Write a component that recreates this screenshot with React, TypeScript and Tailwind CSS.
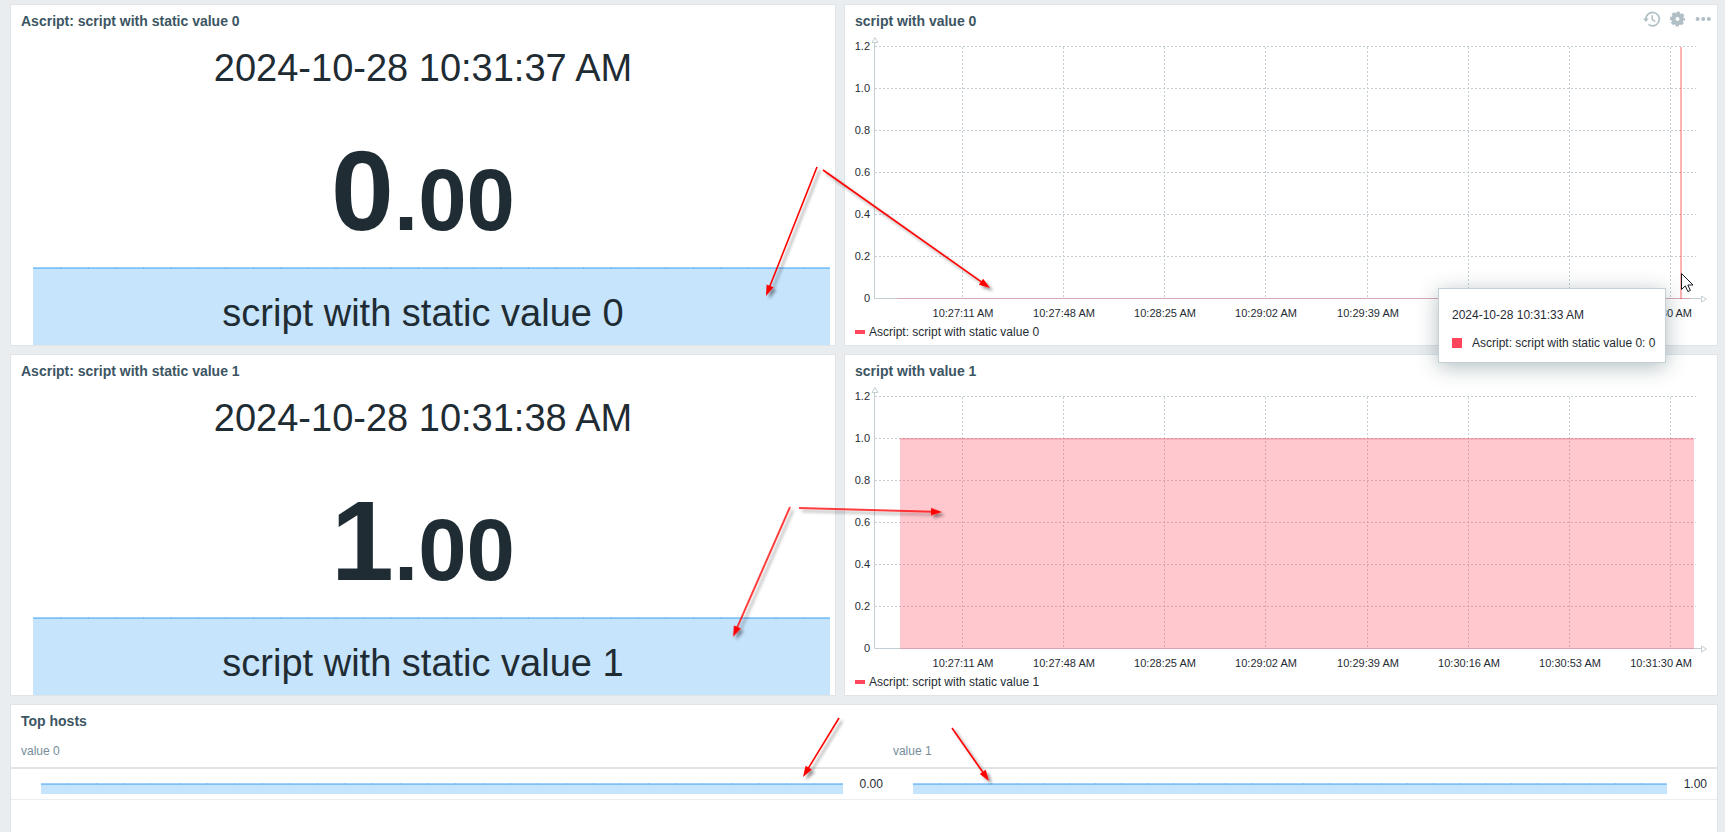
import type { ReactNode } from "react";

// ================= TYPES =================
interface ItemWidgetProps {
  title: string;
  time: string;
  whole: string;
  decimals: string;
  description: string;
}

interface GraphWidgetProps {
  title: string;
  legend: string;
  children?: ReactNode;
  actions?: ReactNode;
}

interface Arrow {
  from: [number, number];
  to: [number, number];
}

// ================= DATA =================
const Y_LABELS = ["1.2", "1.0", "0.8", "0.6", "0.4", "0.2", "0"];

const X_LABELS = [
  "10:27:11 AM",
  "10:27:48 AM",
  "10:28:25 AM",
  "10:29:02 AM",
  "10:29:39 AM",
  "10:30:16 AM",
  "10:30:53 AM",
  "10:31:30 AM",
];

const ARROWS: Arrow[] = [
  { from: [817, 167], to: [766, 296] },
  { from: [823, 170], to: [990, 288] },
  { from: [790, 507], to: [733, 637] },
  { from: [799, 508], to: [942, 512] },
  { from: [839, 718], to: [803, 777] },
  { from: [952, 728], to: [989, 781] },
];

// ================= PANEL =================
function Panel({
  title,
  actions,
  className = "",
  children,
}: {
  title: string;
  actions?: ReactNode;
  className?: string;
  children: ReactNode;
}) {
  return (
    <section className={`border border-[#dfe4e7] bg-white ${className}`}>
      <header className="flex h-[30px] items-start justify-between pr-[6px] pl-[10px]">
        <h2 className="pt-2 text-sm leading-4 font-bold text-[#3c5563]">{title}</h2>
        {actions}
      </header>
      {children}
    </section>
  );
}

// ================= SPARKLINE =================
function SparkTop({ step }: { step: number }) {
  return (
    <svg className="block h-[2px] w-full" aria-hidden="true">
      <rect width="100%" height="1" fill="#9dd0fa" />
      <rect y="1" width="100%" height="1" fill="#7cc2f9" />
      <line
        x1={step}
        x2="100%"
        y1="1"
        y2="1"
        stroke="#6bb0e8"
        strokeOpacity="0.6"
        strokeWidth="2"
        strokeDasharray={`1 ${step - 1}`}
      />
    </svg>
  );
}

// ================= ITEM VALUE =================
function ItemWidget({ title, time, whole, decimals, description }: ItemWidgetProps) {
  return (
    <Panel title={title}>
      <p className="mt-[11px] text-center text-[38px] leading-[44px]">{time}</p>
      <p className="mt-11 text-center text-[113px] leading-[114px] font-bold">
        {whole}
        <span className="text-[87px] leading-none">.{decimals}</span>
      </p>
      <div className="mt-[19px] mr-[5px] ml-[22px] bg-[#c6e4fc]">
        <SparkTop step={27.5} />
        <p className="pt-[22px] pr-[17px] pb-[10px] text-center text-[38px] leading-[44px]">
          {description}
        </p>
      </div>
    </Panel>
  );
}

// ================= GRAPH =================
const gridX = (i: number): number => Math.round(117 + i * 101.14);
const gridY = (i: number): number => 11 + i * 42;

function GraphWidget({ title, legend, children, actions }: GraphWidgetProps) {
  return (
    <Panel title={title} actions={actions}>
      <svg viewBox="0 0 872 285" className="block h-auto w-full" role="img" aria-label={title}>
        <g stroke="#c4cfd5" strokeDasharray="2 2">
          {Y_LABELS.slice(0, -1).map((label, i) => (
            <line key={label} x1="30" x2="851" y1={gridY(i) + 0.5} y2={gridY(i) + 0.5} />
          ))}
          {X_LABELS.map((label, i) => (
            <line key={label} x1={gridX(i) + 0.5} x2={gridX(i) + 0.5} y1="12" y2="263" />
          ))}
        </g>
        <g stroke="#c4cfd5" fill="#fff">
          <path d="M29.5 7.5V263.5H856" fill="none" />
          <path d="M27 7.5h6l-3-5z" />
          <path d="M856.5 261v6l5-3z" />
        </g>
        <g fontSize="11" fill="#1f2c33">
          {Y_LABELS.map((label, i) => (
            <text key={label} x="25" y={gridY(i) + 4} textAnchor="end">
              {label}
            </text>
          ))}
          {X_LABELS.map((label, i) => {
            const last = i === X_LABELS.length - 1;
            return (
              <text
                key={label}
                x={last ? 847 : gridX(i) + 1}
                y="282"
                textAnchor={last ? "end" : "middle"}
              >
                {label}
              </text>
            );
          })}
        </g>
        {children}
      </svg>
      <div className="flex h-[25px] items-center gap-1 pb-[2px] pl-[10px] text-xs">
        <span className="h-1 w-[10px] bg-[#ff465c]" />
        {legend}
      </div>
    </Panel>
  );
}

function GraphActions() {
  return (
    <div className="flex gap-2 pt-[6px] text-[#b0bec5]">
      <button type="button" aria-label="Time period">
        <svg width="18" height="16" viewBox="0 0 18 16" fill="none" stroke="currentColor">
          <path d="M2.9 8.6a6.7 6.7 0 1 1 2.6 4.8" strokeWidth="1.7" />
          <path d="M0 7.6h5.8L2.9 11z" fill="currentColor" stroke="none" />
          <path d="M9.2 4.3v4l3 2.3" strokeWidth="1.5" />
        </svg>
      </button>
      <button type="button" aria-label="Edit">
        <svg width="18" height="16" viewBox="0 0 18 16" fill="none" stroke="currentColor">
          <circle cx="8.5" cy="8" r="4.1" strokeWidth="4.2" />
          <circle
            cx="8.5"
            cy="8"
            r="6.5"
            strokeWidth="2"
            strokeDasharray="3.3 1.805"
            strokeDashoffset="1.65"
          />
        </svg>
      </button>
      <button type="button" aria-label="More">
        <svg width="16" height="16" viewBox="0 0 16 16" fill="currentColor">
          <circle cx="2.6" cy="8" r="2" />
          <circle cx="8.2" cy="8" r="2" />
          <circle cx="13.8" cy="8" r="2" />
        </svg>
      </button>
    </div>
  );
}

// ================= TOP HOSTS =================
function SparkCell({ value, step }: { value: string; step: number }) {
  return (
    <div className="flex items-center gap-[17px] pl-5">
      <div className="mt-[10px] flex-1 bg-[#c6e4fc] pb-[9px]">
        <SparkTop step={step} />
      </div>
      <span>{value}</span>
    </div>
  );
}

function TopHosts() {
  return (
    <Panel title="Top hosts" className="flex-1 border-b-0">
      <table className="w-full table-fixed text-xs">
        <colgroup>
          <col className="w-[51.4%]" />
          <col />
        </colgroup>
        <thead>
          <tr className="h-[33px] border-b-2 border-[#dfe4e7] text-left text-[#768d99]">
            <th className="pl-[10px] font-normal">value 0</th>
            <th className="pl-[5px] font-normal">value 1</th>
          </tr>
        </thead>
        <tbody>
          <tr className="h-[31px] border-b border-[#ebeef0]">
            <td className="pr-[5px] pl-[10px]">
              <SparkCell value="0.00" step={27.6} />
            </td>
            <td className="pr-[10px] pl-[5px]">
              <SparkCell value="1.00" step={26} />
            </td>
          </tr>
        </tbody>
      </table>
    </Panel>
  );
}

// ================= OVERLAYS =================
function Annotations() {
  return (
    <svg className="pointer-events-none absolute inset-0 h-full w-full" aria-hidden="true">
      <defs>
        <filter id="shadow" filterUnits="userSpaceOnUse" x="0" y="0" width="100%" height="100%">
          <feDropShadow dx="3" dy="3" stdDeviation="1.5" floodColor="#000" floodOpacity="0.4" />
        </filter>
      </defs>
      <g filter="url(#shadow)" stroke="#f00" fill="#f00">
        {ARROWS.map(({ from, to }) => {
          const length = Math.hypot(to[0] - from[0], to[1] - from[1]);
          const angle = (Math.atan2(to[1] - from[1], to[0] - from[0]) * 180) / Math.PI;
          return (
            <g key={from.join()} transform={`translate(${from[0]} ${from[1]}) rotate(${angle})`}>
              <line x2={length - 8} strokeWidth="1.6" />
              <path d={`M${length} 0l-11-3.7v7.4z`} stroke="none" />
            </g>
          );
        })}
      </g>
      <path
        d="M1681.5 273.5v16l3.8-3.6 2.6 5.7 2.5-1.2-2.6-5.4h5.2z"
        fill="#fff"
        stroke="#1a1a24"
      />
    </svg>
  );
}

function GraphTooltip() {
  return (
    <div
      role="tooltip"
      className="absolute top-[288px] right-[59px] flex h-[75px] w-[228px] flex-col gap-3 border border-[#c5d0d6] bg-white pt-[18px] pl-[13px] text-xs leading-4 shadow-[0_4px_20px_0_rgba(0,39,51,0.3)]"
    >
      <p>2024-10-28 10:31:33 AM</p>
      <p className="flex items-center gap-[10px] whitespace-nowrap">
        <span className="h-[10px] w-[10px] bg-[#ff465c]" />
        Ascript: script with static value 0: 0
      </p>
    </div>
  );
}

// ================= MAIN =================
export default function App() {
  return (
    <main className="relative flex min-h-screen flex-col gap-2 bg-[#e9edf0] pt-1 pr-[7px] pl-[10px] font-['Liberation_Sans',Arial,sans-serif] text-[#1f2c33]">
      <div className="grid grid-cols-[826fr_874fr] gap-2">
        <ItemWidget
          title="Ascript: script with static value 0"
          time="2024-10-28 10:31:37 AM"
          whole="0"
          decimals="00"
          description="script with static value 0"
        />
        <GraphWidget
          title="script with value 0"
          legend="Ascript: script with static value 0"
          actions={<GraphActions />}
        >
          <line x1="52" x2="846" y1="263.5" y2="263.5" stroke="#dba9b5" />
          <rect x="835" y="12" width="2" height="252" fill="#f00" fillOpacity="0.3" />
        </GraphWidget>
        <ItemWidget
          title="Ascript: script with static value 1"
          time="2024-10-28 10:31:38 AM"
          whole="1"
          decimals="00"
          description="script with static value 1"
        />
        <GraphWidget title="script with value 1" legend="Ascript: script with static value 1">
          <rect x="55" y="53" width="794" height="211" fill="#ff465c" fillOpacity="0.3" />
          <rect x="55" y="53" width="794" height="2" fill="#d0304a" fillOpacity="0.15" />
        </GraphWidget>
      </div>
      <TopHosts />
      <GraphTooltip />
      <Annotations />
    </main>
  );
}
